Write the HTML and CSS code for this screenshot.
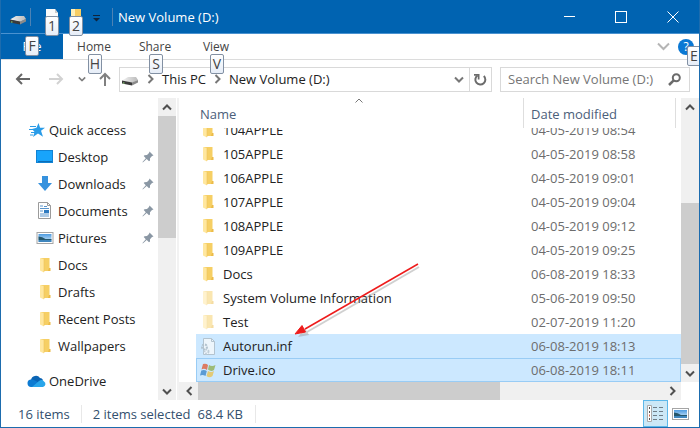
FILE: index.html
```html
<!DOCTYPE html>
<html lang="en">
<head>
    <meta charset="UTF-8">
    <title>New Volume (D:)</title>
    <link rel="stylesheet" href="styles.css">
</head>
<body>
<!-- shared icons -->
<svg class="defs" width="0" height="0" aria-hidden="true">
  <defs>
    <linearGradient id="driveTop" x1="0" y1="0" x2="1" y2="0">
      <stop offset="0" stop-color="#f4f4f4"/><stop offset="1" stop-color="#b9b9b9"/>
    </linearGradient>
    <linearGradient id="photoSky" x1="0" y1="0" x2="0" y2="1">
      <stop offset="0" stop-color="#4d9be0"/><stop offset="1" stop-color="#d8edfb"/>
    </linearGradient>
  </defs>
  <symbol id="i-drive" viewBox="0 0 18 10">
    <path d="M1 4.500 7 1h8l2 3-6 3z" fill="url(#driveTop)"/>
    <path d="M1 4.500 11 6.500v3L1 7.500z" fill="#3b3b3b"/>
    <path d="M11 6.500 17 4v2.500l-6 3z" fill="#8a8a8a"/>
    <path d="M2 7h1.500" stroke="#8ee07a"/>
  </symbol>
  <symbol id="i-folder" viewBox="0 0 12 16">
    <path d="M2 1h8.500v11H11v2H4z" fill="#f6cf64"/>
    <path d="M10 11h1.500v3H9z" fill="#ecbb48"/>
    <path d="M1 1 5 2v13.500L1 13.500z" fill="#ffe79f"/>
    <path d="M5 2v13" stroke="#eec25a" stroke-width=".6"/>
  </symbol>
  <symbol id="i-pin" viewBox="0 0 12 12">
    <path d="M7.500.5 11.500 4.500 10 5 8 7.200 8 9.500 7 10.300 4.700 8 .8 11.400.5 11.100 3.800 7.200 1.700 5.100 2.500 4.200 5 4.100 7 2z" fill="#8a97a4"/>
  </symbol>
  <symbol id="i-photo" viewBox="0 0 17 12">
    <rect x=".5" y=".5" width="16" height="11" fill="#fff" stroke="#a5a5a5"/>
    <rect x="2" y="2" width="13" height="8" fill="url(#photoSky)"/>
    <path d="M2 4.500q4 0 7 2.500h6v1H2z" fill="#25566b"/>
    <path d="M2 8h13v2H2z" fill="#3f86bd"/>
  </symbol>
  <symbol id="i-up" viewBox="0 0 10 7"><path d="M1 5.500 5 1.500 9 5.500" fill="none" stroke="currentColor" stroke-width="2"/></symbol>
  <symbol id="i-down" viewBox="0 0 10 7"><path d="M1 1.500 5 5.500 9 1.500" fill="none" stroke="currentColor" stroke-width="2"/></symbol>
  <symbol id="i-left" viewBox="0 0 7 10"><path d="M5.500 1 1.500 5 5.500 9" fill="none" stroke="currentColor" stroke-width="2"/></symbol>
  <symbol id="i-right" viewBox="0 0 7 10"><path d="M1.500 1 5.500 5 1.500 9" fill="none" stroke="currentColor" stroke-width="2"/></symbol>
</svg>

<div class="window">
  <header class="titlebar">
    <svg class="title-drive" width="18" height="10"><use href="#i-drive"/></svg>
    <span class="divider"></span>
    <button class="quick" aria-label="Properties">
      <svg width="14" height="16" viewBox="0 0 14 16"><path d="M1 0h9l3 4v12H1z" fill="#fafafa"/><path d="M10 0v4h3z" fill="#c9c9c9"/></svg>
      <kbd class="tip">1</kbd>
    </button>
    <button class="quick" aria-label="New folder">
      <svg width="14" height="16" viewBox="0 0 14 16"><path d="M2 0h10v16H2z" fill="#f7cd62"/><path d="M2 0h4v16H2z" fill="#fff0b8"/></svg>
      <kbd class="tip">2</kbd>
    </button>
    <button class="customize" aria-label="Customize toolbar">
      <svg width="7" height="7" viewBox="0 0 7 7"><path d="M0 .5h7" stroke="#10243c"/><path d="M0 3h7L3.500 6.500z" fill="#10243c"/></svg>
    </button>
    <span class="divider"></span>
    <h1>New Volume (D:)</h1>
    <div class="caption">
      <button aria-label="Minimize"><svg width="11" height="11" viewBox="0 0 11 11"><path d="M0 5.500h11" stroke="#fff"/></svg></button>
      <button aria-label="Maximize"><svg width="12" height="12" viewBox="0 0 12 12"><rect x=".5" y=".5" width="11" height="11" fill="none" stroke="#fff"/></svg></button>
      <button aria-label="Close"><svg width="12" height="12" viewBox="0 0 12 12"><path d="M.5.5l11 11M11.500.5l-11 11" stroke="#fff"/></svg></button>
    </div>
  </header>

  <nav class="ribbon">
    <button class="tab file">File<kbd class="tip">F</kbd></button>
    <button class="tab">Home<kbd class="tip">H</kbd></button>
    <button class="tab">Share<kbd class="tip">S</kbd></button>
    <button class="tab">View<kbd class="tip">V</kbd></button>
    <button class="expand" aria-label="Expand the ribbon">
      <svg width="13" height="9" viewBox="0 0 13 9"><path d="M1 1.500 6.500 7 12 1.500" fill="none" stroke="#b5b5b5" stroke-width="2"/></svg>
    </button>
    <button class="help" aria-label="Help"><span>?</span><kbd class="tip">E</kbd></button>
  </nav>

  <div class="navbar">
    <div class="history">
      <button aria-label="Back"><svg width="15" height="12" viewBox="0 0 15 12"><path d="M15 6H2M7 1 2 6l5 5" fill="none" stroke="#666" stroke-width="2"/></svg></button>
      <button aria-label="Forward"><svg width="15" height="12" viewBox="0 0 15 12"><path d="M0 6h13M8 1l5 5-5 5" fill="none" stroke="#d2d2d2" stroke-width="2"/></svg></button>
      <button class="recent" aria-label="Recent locations"><svg width="8" height="6" viewBox="0 0 10 7"><use href="#i-down"/></svg></button>
      <button class="up" aria-label="Up"><svg width="12" height="14" viewBox="0 0 12 14"><path d="M6 14V2M1 7l5-5 5 5" fill="none" stroke="#808080" stroke-width="2"/></svg></button>
    </div>
    <div class="address">
      <svg class="addr-drive" width="18" height="10"><use href="#i-drive"/></svg>
      <svg class="sep" width="7" height="10"><use href="#i-right"/></svg>
      <a href="#">This PC</a>
      <svg class="sep" width="7" height="10"><use href="#i-right"/></svg>
      <a href="#">New Volume (D:)</a>
      <button class="previous" aria-label="Previous locations"><svg width="10" height="7"><use href="#i-down"/></svg></button>
      <button class="refresh" aria-label="Refresh">
        <svg width="13" height="13" viewBox="0 0 13 13"><path d="M8 1.500h4.500v4.500M12 2 9.300 4.500" fill="none" stroke="#6b6b6b" stroke-width="0"/><path d="M3.500 2.500A5 5 0 1 0 9.800 3" fill="none" stroke="#6b6b6b" stroke-width="2"/><path d="M0 1h5.500v5.500H3.800V2.800H0z" fill="#6b6b6b"/></svg>
      </button>
    </div>
    <div class="search">
      <input type="text" aria-label="Search" placeholder="Search New Volume (D:)">
      <svg width="13" height="13" viewBox="0 0 13 13"><circle cx="8.300" cy="4.700" r="3.500" fill="none" stroke="#6b6b6b" stroke-width="2"/><path d="M5.700 7.300 1 12" stroke="#6b6b6b" stroke-width="2.500"/></svg>
    </div>
  </div>

  <main class="content">
    <aside class="sidebar">
      <ul class="tree">
        <li class="root">
          <svg width="16" height="14" viewBox="0 0 16 14"><path d="M9.500 0l1.600 4.800H16l-4 3 2 6-5-3.300L4 14l1.600-5L3 6l4.500-1.200z" fill="#2a9ce8"/><path d="M1 3.500h6M0 6.500h5M2 9.500h4M1 12h3" stroke="#2a9ce8"/></svg>
          <a href="#">Quick access</a>
        </li>
        <li>
          <svg width="18" height="13" viewBox="0 0 18 13"><rect x=".5" y=".5" width="16" height="12" fill="#18a4fb" stroke="#1183d4"/><path d="M2 11.500h14" stroke="#0c6db6"/></svg>
          <a href="#">Desktop</a>
          <svg class="pin" width="12" height="12"><use href="#i-pin"/></svg>
        </li>
        <li>
          <svg width="18" height="15" viewBox="0 0 18 15"><path d="M6 0h6v7h4l-7 8-7-8h4z" fill="#3692de"/></svg>
          <a href="#">Downloads</a>
          <svg class="pin" width="12" height="12"><use href="#i-pin"/></svg>
        </li>
        <li>
          <svg width="18" height="17" viewBox="0 0 18 17"><path d="M2.500.5h9l3 3v13h-12z" fill="#fff" stroke="#9b9b9b"/><path d="M11.500.5v3h3" fill="none" stroke="#9b9b9b"/><path d="M4 4h3M8 4.500h3M4 6.500h9M4 12h9M4 14h9M4 9h3" stroke="#5a95cc"/><path d="M8 8h5v3H8z" fill="#2e7ac0"/></svg>
          <a href="#">Documents</a>
          <svg class="pin" width="12" height="12"><use href="#i-pin"/></svg>
        </li>
        <li>
          <svg width="18" height="12"><use href="#i-photo"/></svg>
          <a href="#">Pictures</a>
          <svg class="pin" width="12" height="12"><use href="#i-pin"/></svg>
        </li>
        <li><svg width="18" height="16"><use href="#i-folder"/></svg><a href="#">Docs</a></li>
        <li><svg width="18" height="16"><use href="#i-folder"/></svg><a href="#">Drafts</a></li>
        <li><svg width="18" height="16"><use href="#i-folder"/></svg><a href="#">Recent Posts</a></li>
        <li><svg width="18" height="16"><use href="#i-folder"/></svg><a href="#">Wallpapers</a></li>
        <li class="root cloud">
          <svg width="19" height="12" viewBox="0 0 19 12"><path d="M4 5A5 5 0 0 1 13 3q2 0 3 2l-4 4z" fill="#0a64b4"/><path d="M4 12a3.800 3.800 0 0 1-.5-7.500Q6 4 8 5.500L14 9l-4 3z" fill="#0d7bd2"/><path d="M5 12l7-6q3-2 5 .5a3 3 0 0 1-1 5.500z" fill="#29a5ea"/></svg>
          <a href="#">OneDrive</a>
        </li>
      </ul>
      <div class="scroll-v">
        <button aria-label="Scroll up"><svg width="10" height="7"><use href="#i-up"/></svg></button>
        <div class="track"><div class="thumb side-thumb"></div></div>
        <button aria-label="Scroll down"><svg width="10" height="7"><use href="#i-down"/></svg></button>
      </div>
    </aside>

    <section class="files">
      <div class="list-row">
        <table class="list">
          <thead>
            <tr>
              <th class="name" scope="col">Name<svg class="sort" width="8" height="5" viewBox="0 0 8 5"><path d="M.5 4.500 4 1l3.500 3.500" fill="none" stroke="#777"/></svg></th>
              <th class="date" scope="col">Date modified</th>
            </tr>
          </thead>
          <tbody>
            <tr><td class="name"><svg width="12" height="16"><use href="#i-folder"/></svg>104APPLE</td><td class="date">04-05-2019 08:54</td></tr>
            <tr><td class="name"><svg width="12" height="16"><use href="#i-folder"/></svg>105APPLE</td><td class="date">04-05-2019 08:58</td></tr>
            <tr><td class="name"><svg width="12" height="16"><use href="#i-folder"/></svg>106APPLE</td><td class="date">04-05-2019 09:01</td></tr>
            <tr><td class="name"><svg width="12" height="16"><use href="#i-folder"/></svg>107APPLE</td><td class="date">04-05-2019 09:04</td></tr>
            <tr><td class="name"><svg width="12" height="16"><use href="#i-folder"/></svg>108APPLE</td><td class="date">04-05-2019 09:12</td></tr>
            <tr><td class="name"><svg width="12" height="16"><use href="#i-folder"/></svg>109APPLE</td><td class="date">04-05-2019 09:25</td></tr>
            <tr><td class="name"><svg width="12" height="16"><use href="#i-folder"/></svg>Docs</td><td class="date">06-08-2019 18:33</td></tr>
            <tr class="hidden-item"><td class="name"><svg width="12" height="16"><use href="#i-folder"/></svg>System Volume Information</td><td class="date">05-06-2019 09:50</td></tr>
            <tr class="hidden-item"><td class="name"><svg width="12" height="16"><use href="#i-folder"/></svg>Test</td><td class="date">02-07-2019 11:20</td></tr>
            <tr class="selected">
              <td class="name"><svg width="16" height="17" viewBox="0 0 16 17"><path d="M3.500.5h8l3 3v13h-11z" fill="#edf5fb" stroke="#b3c3cf"/><path d="M11.500.5v3h3" fill="none" stroke="#b3c3cf"/><circle cx="4.500" cy="9" r="2.500" fill="none" stroke="#b3c3cf" stroke-width="2" stroke-dasharray="2 1"/><circle cx="6.500" cy="13.500" r="2" fill="none" stroke="#c0ced8" stroke-width="2" stroke-dasharray="1.500 1"/></svg>Autorun.inf</td>
              <td class="date">06-08-2019 18:13</td>
            </tr>
            <tr class="selected focused">
              <td class="name"><svg width="16" height="15" viewBox="0 0 16 15"><path d="M3 1q3-1 5 1L7 7Q4 5 1.500 6.500z" fill="#dc7a62"/><path d="M9 2q3 2 6.500 0L14 7q-3 2-6-.5z" fill="#9dbb78"/><path d="M1.300 7.500q3-1 5.500.5l-1.300 5Q3 11.500 0 12.500z" fill="#5b9bd4"/><path d="M8 8q3 2 6 0l-1.500 5q-3 2.500-6 0z" fill="#e3ca76"/></svg>Drive.ico</td>
              <td class="date">06-08-2019 18:11</td>
            </tr>
          </tbody>
        </table>
        <div class="scroll-v">
          <button aria-label="Scroll up"><svg width="10" height="7"><use href="#i-up"/></svg></button>
          <div class="track end"><div class="thumb list-thumb"></div></div>
          <button aria-label="Scroll down"><svg width="10" height="7"><use href="#i-down"/></svg></button>
        </div>
      </div>
      <div class="scroll-h">
        <button aria-label="Scroll left"><svg width="7" height="10"><use href="#i-left"/></svg></button>
        <div class="track"><div class="thumb wide-thumb"></div></div>
        <button aria-label="Scroll right"><svg width="7" height="10"><use href="#i-right"/></svg></button>
      </div>
      <svg class="pointer" width="132" height="78" viewBox="0 0 132 78">
        <path d="M126 5 14 70" stroke="#999" stroke-width="2" opacity=".45"/>
        <path d="M5 75 12 66 16 73z" fill="#999" opacity=".45"/>
        <path d="M125 2 12 67" stroke="#ee1c1c" stroke-width="1.500"/>
        <path d="M2 72 9 63.500 12.500 70z" fill="#ee1c1c" stroke="#ee1c1c"/>
      </svg>
    </section>
  </main>

  <footer class="status">
    <span class="count">16 items</span>
    <span class="selection">2 items selected</span>
    <span class="size">68.4 KB</span>
    <div class="views">
      <button class="active" aria-label="Details view">
        <svg width="17" height="17" viewBox="0 0 17 17"><path d="M.5.5h4v16h-4z" fill="#fff" stroke="#aaa"/><path d="M2 3h1M2 7h1M2 14h1" stroke="#555" stroke-width="2"/><path d="M2 10.500h1" stroke="#d7603a" stroke-width="2"/><path d="M6 2.500h4M12 2.500h4M6 6.500h4M12 6.500h4M6 10.500h4M12 10.500h4M6 14.500h4M12 14.500h4" stroke="#6f7d86"/></svg>
      </button>
      <button aria-label="Large icons view"><svg width="17" height="12"><use href="#i-photo"/></svg></button>
    </div>
  </footer>
</div>
</body>
</html>
```
FILE: styles.css
```css
* {
    box-sizing: border-box;
}
body {
    margin: 0;
    font-family: "Open Sans", "Noto Sans", sans-serif;
    font-size: 13px;
    line-height: 18px;
    color: #222;
}
button {
    margin: 0;
    padding: 0;
    border: 0;
    background: none;
    font: inherit;
    color: inherit;
    display: flex;
    align-items: center;
    justify-content: center;
}
a {
    color: inherit;
    text-decoration: none;
}
svg {
    flex: none;
}
.defs {
    position: absolute;
}
.window {
    display: flex;
    flex-direction: column;
    height: 100vh;
    overflow: hidden;
    background: #fff;
    border: 1px solid #1d6cae;
    border-top: 0;
}

/* key tips hang over the control they belong to */
.tip {
    position: absolute;
    z-index: 2;
    width: 14px;
    height: 20px;
    border: 1px solid #8290a3;
    border-radius: 2px;
    background: linear-gradient(#fff, #e6edf7);
    color: #444;
    font-family: inherit;
    font-size: 14px;
    line-height: 18px;
    text-align: center;
}

/* title bar */
.titlebar {
    display: flex;
    align-items: center;
    flex: none;
    height: 34px;
    padding-left: 8px;
    background: #0063b1;
    border-bottom: 1px solid #4a92d0;
    color: #fff;
}
.title-drive {
    margin-top: 6px;
}
.divider {
    width: 1px;
    height: 18px;
    margin: 0 14px 0 3px;
    background: #4d82b4;
}
.quick {
    position: relative;
    width: 14px;
    height: 16px;
    margin-right: 10px;
}
.quick .tip {
    top: 7px;
    left: 0;
}
.customize {
    width: 7px;
    margin: 4px 12px 0 0;
}
.customize + .divider {
    margin: 0 5px 0 0;
}
.titlebar h1 {
    margin: 0;
    font-size: 13px;
    font-weight: 400;
}
.caption {
    display: flex;
    align-self: stretch;
    margin-left: auto;
}
.caption button {
    width: 52px;
}

/* ribbon */
.ribbon {
    display: flex;
    flex: none;
    height: 26px;
    border-bottom: 1px solid #dcdcdc;
}
.tab {
    position: relative;
    width: 60px;
    margin-right: 1px;
    color: #444;
    font-size: 12px;
}
.tab.file {
    width: 62px;
    background: #0063b1;
    color: #fff;
}
.tab .tip {
    top: 20px;
    left: 24px;
}
.tab.file .tip {
    top: 2px;
}
.expand {
    width: 20px;
    margin-left: auto;
}
.help {
    position: relative;
    width: 26px;
}
.help span {
    width: 16px;
    height: 16px;
    border-radius: 50%;
    background: #0a78d4;
    color: #fff;
    font-size: 12px;
    line-height: 16px;
}
.help .tip {
    top: 12px;
    right: -2px;
}

/* navigation */
.navbar {
    display: flex;
    flex: none;
    align-items: center;
    height: 38px;
    padding-right: 9px;
}
.history {
    display: flex;
    align-items: center;
    gap: 19px;
    padding: 0 8px 0 14px;
    color: #808080;
}
.history .recent {
    margin-left: -5px;
}
.history .up {
    margin-left: -6px;
    width: 12px;
}
.address {
    display: flex;
    flex: 1;
    align-items: center;
    height: 25px;
    border: 1px solid #d9d9d9;
}
.addr-drive {
    margin: 3px 0 0 1px;
}
.sep {
    margin: 0 8px;
    color: #777;
}
.previous {
    margin-left: auto;
    width: 20px;
    color: #777;
}
.refresh {
    align-self: stretch;
    width: 22px;
    border-left: 1px solid #d9d9d9;
}
.search {
    display: flex;
    align-items: center;
    width: 190px;
    height: 25px;
    margin-left: 8px;
    padding: 0 8px 0 7px;
    border: 1px solid #d9d9d9;
}
.search input {
    flex: 1;
    min-width: 0;
    padding: 0;
    border: 0;
    outline: 0;
    background: none;
    font: inherit;
}
.search input::placeholder {
    color: #767676;
}

/* folders and files */
.content {
    display: flex;
    flex: 1;
    min-height: 0;
}
.sidebar {
    display: flex;
    flex: none;
    width: 178px;
    padding-right: 1px;
    border-right: 2px solid #f2f2f2;
}
.tree {
    flex: 1;
    margin: 0;
    padding: 18px 4px 0 0;
    list-style: none;
    overflow: hidden;
}
.tree li {
    display: flex;
    align-items: center;
    gap: 4px;
    height: 27px;
    padding-left: 35px;
}
.tree .root {
    padding-left: 28px;
}
.tree .cloud {
    margin-top: 8px;
    padding-left: 26px;
    gap: 3px;
}
.pin {
    margin-left: auto;
}
.scroll-v {
    display: flex;
    flex: none;
    flex-direction: column;
    width: 18px;
    background: #f0f0f0;
}
.scroll-v button,
.scroll-h button {
    flex: none;
    width: 18px;
    height: 18px;
    color: #505050;
}
.track {
    flex: 1;
}
.track.end {
    display: flex;
    flex-direction: column;
    justify-content: flex-end;
}
.thumb {
    background: #cdcdcd;
}
.side-thumb {
    height: 46%;
}
.list-thumb {
    height: 65%;
}
.files {
    position: relative;
    display: flex;
    flex: 1;
    flex-direction: column;
    min-width: 0;
}
.list-row {
    display: flex;
    flex: 1;
    min-height: 0;
}
.list {
    display: flex;
    flex: 1;
    flex-direction: column;
    padding-left: 17px;
}
.list thead {
    flex: none;
    display: block;
}
.list tr {
    display: flex;
    flex: none;
}
.list th {
    position: relative;
    height: 30px;
    padding: 7px 0 0 4px;
    color: #4c607a;
    font-weight: 400;
    text-align: left;
}
/* scrolled to the last row, so the first one is cut off */
.list tbody {
    display: flex;
    flex: 1;
    flex-direction: column;
    justify-content: flex-end;
    min-height: 0;
    overflow: hidden;
}
.list td {
    display: flex;
    align-items: center;
    height: 24px;
    padding: 0;
}
.list .name {
    flex: 1;
}
.list td.name svg {
    width: 16px;
    margin: 0 7px 0 4px;
}
.list .date {
    width: 157px;
    padding-left: 7px;
}
.list th.date {
    width: 153px;
    margin-right: 5px;
    border-left: 1px solid #dedede;
    border-right: 1px solid #dedede;
}
.list td.date {
    color: #6d6d6d;
}
.sort {
    position: absolute;
    top: 0;
    left: 50%;
    margin-left: -5px;
}
.hidden-item svg {
    opacity: .5;
}
.selected {
    background: #cce8ff;
}
.focused {
    box-shadow: inset 0 0 0 1px #99ccf5;
}
.scroll-h {
    display: flex;
    flex: none;
    height: 18px;
    margin-right: 18px;
    padding-left: 1px;
    background: #f0f0f0;
}
.scroll-h .thumb {
    width: 65%;
    height: 18px;
}
.pointer {
    position: absolute;
    top: 164px;
    left: 114px;
    pointer-events: none;
}

/* status bar */
.status {
    display: flex;
    flex: none;
    align-items: center;
    height: 27px;
    padding-left: 17px;
    color: #33506e;
}
.count {
    padding-right: 11px;
    border-right: 1px solid #e8e8e8;
}
.selection {
    padding-left: 11px;
}
.size {
    margin-left: 7px;
    padding-right: 12px;
    border-right: 1px solid #e8e8e8;
}
.views {
    display: flex;
    align-self: stretch;
    margin-left: auto;
    padding-right: 6px;
}
.views button {
    width: 25px;
}
.views .active {
    background: #cce8f6;
    border: 1px solid #5db8ea;
}
```
